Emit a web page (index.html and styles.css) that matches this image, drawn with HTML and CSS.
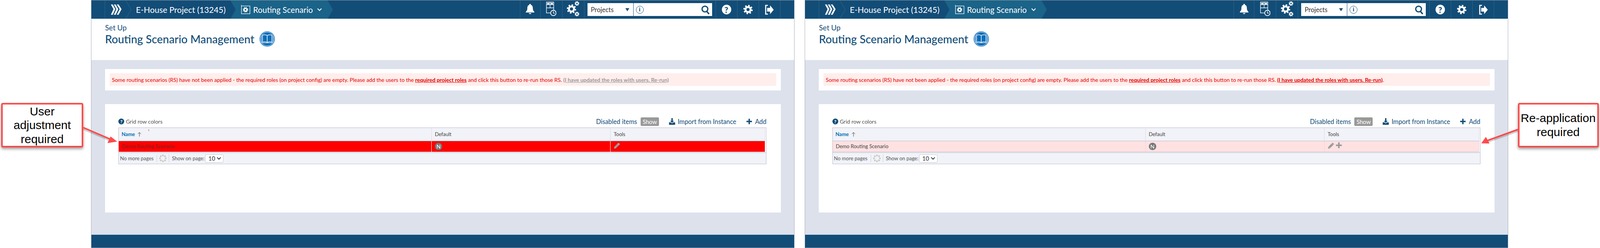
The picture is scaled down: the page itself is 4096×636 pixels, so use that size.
FILE: index.html
```html
<!DOCTYPE html>
<html lang="en">
<head>
<meta charset="utf-8">
<title>Routing Scenario Management</title>
<link rel="stylesheet" href="styles.css">
</head>
<body>
<svg class="sprite" aria-hidden="true">
  <symbol id="logo" viewBox="0 0 32 30"><path d="M1 1h5l7 13-7 15H1l7-15zM9 1h5l7 13-7 15H9l7-15zM17 1h5l8 13-8 15h-5l8-15z" fill="currentColor"/></symbol>
  <symbol id="gear" viewBox="0 0 24 24"><circle cx="12" cy="12" r="6.5" fill="none" stroke="currentColor" stroke-width="5"/><circle cx="12" cy="12" r="10" fill="none" stroke="currentColor" stroke-width="4" stroke-dasharray="3.9 3.95"/></symbol>
  <symbol id="gears" viewBox="0 0 32 40"><use href="#gear" x="0" y="8" width="24" height="24"/><use href="#gear" x="20" y="0" width="12" height="12"/><use href="#gear" x="20" y="27" width="12" height="12"/></symbol>
  <symbol id="bell" viewBox="0 0 24 26"><path d="M12 0a2 2 0 0 1 2 2.400c4 1 5 4.600 5 8.600 0 4 1 6.500 4 9.500v1.500H1V20.500C4 17.500 5 15 5 11c0-4 1-7.600 5-8.600A2 2 0 0 1 12 0zM9 23.500h6a3 2.500 0 0 1-6 0z" fill="currentColor"/></symbol>
  <symbol id="planner" viewBox="0 0 28 40"><g fill="none" stroke="currentColor" stroke-width="1.500"><rect x="1" y="1" width="20" height="30"/><path d="M1 8h20M11 1v16M1 17h20"/><circle cx="20" cy="31" r="7.500" fill="#124d78" stroke-width="2"/><path d="M20 26v5.500h4"/></g><path d="M3 3h6v5H3zM13 3h6v5h-6z" fill="currentColor"/></symbol>
  <symbol id="search" viewBox="0 0 24 26"><circle cx="10.500" cy="11" r="8" fill="none" stroke="currentColor" stroke-width="3.500"/><path d="M16 18l6 7" stroke="currentColor" stroke-width="4"/></symbol>
  <symbol id="exit" viewBox="0 0 26 30"><path d="M9 3H3v24h6" fill="none" stroke="currentColor" stroke-width="3"/><path d="M7 10h8V3l10 12-10 12v-7H7z" fill="currentColor"/></symbol>
  <symbol id="pagebook" viewBox="0 0 28 30"><path d="M2 1v26h25V4H2" fill="none" stroke="currentColor" stroke-width="1.500"/><use href="#gear" x="6" y="7" width="16" height="16"/></symbol>
  <symbol id="manual" viewBox="0 0 40 40"><circle cx="20" cy="20" r="19.500" fill="#0b6cb8"/><circle cx="20" cy="20" r="17.500" fill="none" stroke="#fff" stroke-width="1"/><path d="M20 11c-3-2-8-2-12-1v18c4-1 9-1 12 1 3-2 8-2 12-1V10c-4-1-9-1-12 1zM20 11v18" fill="none" stroke="#fff" stroke-width="1.500"/><path d="M5 12v18h30V12" fill="none" stroke="#fff" stroke-width="1"/></symbol>
  <symbol id="download" viewBox="0 0 24 24"><path d="M9.500 0h5v10H19l-7 7-7-7h4.500zM1 15h6l5 4 5-4h6v9H1z" fill="currentColor"/></symbol>
  <symbol id="plus" viewBox="0 0 16 16"><path d="M6 0h4v6h6v4h-6v6H6v-6H0V6h6z" fill="currentColor"/></symbol>
  <symbol id="pencil" viewBox="0 0 24 24"><path d="M17.500 1l5.500 5.500L7.500 22 1 23l1-6.500z" fill="currentColor"/><path d="M4 16.500l3.500 3.500M15 4l5 5" stroke="#fff" stroke-width=".8"/></symbol>
  <symbol id="spinner" viewBox="0 0 24 24"><g fill="#c9c9c2"><circle cx="12" cy="3" r="2.800"/><circle cx="18.400" cy="5.600" r="2.800"/><circle cx="21" cy="12" r="2.800"/><circle cx="18.400" cy="18.400" r="2.800"/><circle cx="12" cy="21" r="2.800"/><circle cx="5.600" cy="18.400" r="2.800"/><circle cx="3" cy="12" r="2.800"/><circle cx="5.600" cy="5.600" r="2.800"/></g></symbol>
  <symbol id="chev-down" viewBox="0 0 12 10"><path d="M1 2l5 5 5-5" fill="none" stroke="currentColor" stroke-width="2.200"/></symbol>
</svg>

<div class="page">
  <div class="gutter gutter-left">
    <div class="callout callout-left">User<br>adjustment<br>required</div>
  </div>

  <section class="app">
    <header class="topbar">
      <div class="topbar-start"></div>
      <div class="crumb-logo"><svg class="icon-logo"><use href="#logo"/></svg></div>
      <svg class="chev" viewBox="0 0 14 47" preserveAspectRatio="none"><polyline points="0,0 14,23.500 0,47"/></svg>
      <div class="crumb-project">E-House Project (13245)</div>
      <div class="crumb-active">
        <svg class="icon-pagebook"><use href="#pagebook"/></svg>
        <span>Routing Scenario</span>
        <svg class="icon-chev"><use href="#chev-down"/></svg>
      </div>
      <div class="topbar-end">
        <div class="tool tool-bell"><svg class="icon-bell"><use href="#bell"/></svg></div>
        <div class="tool tool-wide"><svg class="icon-planner"><use href="#planner"/></svg></div>
        <div class="tool tool-wide"><svg class="icon-gears"><use href="#gears"/></svg></div>
        <div class="tool tool-search">
          <div class="searchbox">
            <div class="search-scope"><span>Projects</span><i class="caret"></i></div>
            <div class="search-field"><span class="info">i</span><svg class="icon-search"><use href="#search"/></svg></div>
          </div>
        </div>
        <div class="tool"><span class="help">?</span></div>
        <div class="tool"><svg class="icon-gear"><use href="#gear"/></svg></div>
        <div class="tool"><svg class="icon-exit"><use href="#exit"/></svg></div>
      </div>
    </header>

    <div class="titlebar">
      <div class="kicker">Set Up</div>
      <h1 class="title">Routing Scenario Management <svg class="icon-manual"><use href="#manual"/></svg></h1>
    </div>

    <main class="content">
      <div class="panel panel-alert">
        <div class="alert">Some routing scenarios (RS) have not been applied - the required roles (on project config) are empty. Please add the users to the <a class="alert-link">required project roles</a> and click this button to re-run those RS. <a class="alert-action is-disabled">(I have updated the roles with users. Re-run)</a></div>
      </div>
      <div class="panel panel-grid">
        <div class="toolbar">
          <div class="legend"><span class="help-small">?</span>Grid row colors</div>
          <div class="actions">
            <span class="act-label">Disabled items</span><span class="badge">Show</span>
            <svg class="icon-download"><use href="#download"/></svg><span class="act-import">Import from Instance</span>
            <svg class="icon-plus"><use href="#plus"/></svg><span class="act-add">Add</span>
          </div>
        </div>
        <div class="grid">
          <div class="grid-row grid-head">
            <div class="cell cell-name">Name <svg class="sort" viewBox="0 0 12 16"><path d="M6 15V2M1 7l5-5 5 5" fill="none" stroke="#333" stroke-width="1.200"/></svg></div>
            <div class="cell">Default</div>
            <div class="cell">Tools</div>
          </div>
          <div class="grid-row grid-body row-error">
            <div class="cell">Demo Routing Scenario</div>
            <div class="cell"><span class="flag">N</span></div>
            <div class="cell cell-tools"><svg class="icon-pencil"><use href="#pencil"/></svg></div>
          </div>
          <div class="grid-foot">
            <span>No more pages</span>
            <svg class="spinner"><use href="#spinner"/></svg>
            <span>Show on page:</span>
            <span class="pagesize">10<svg class="pagesize-chev"><use href="#chev-down"/></svg></span>
          </div>
        </div>
      </div>
    </main>
    <footer class="bottombar"></footer>
  </section>

  <div class="gutter-mid"></div>

  <section class="app">
    <header class="topbar">
      <div class="topbar-start"></div>
      <div class="crumb-logo"><svg class="icon-logo"><use href="#logo"/></svg></div>
      <svg class="chev" viewBox="0 0 14 47" preserveAspectRatio="none"><polyline points="0,0 14,23.500 0,47"/></svg>
      <div class="crumb-project">E-House Project (13245)</div>
      <div class="crumb-active">
        <svg class="icon-pagebook"><use href="#pagebook"/></svg>
        <span>Routing Scenario</span>
        <svg class="icon-chev"><use href="#chev-down"/></svg>
      </div>
      <div class="topbar-end">
        <div class="tool tool-bell"><svg class="icon-bell"><use href="#bell"/></svg></div>
        <div class="tool tool-wide"><svg class="icon-planner"><use href="#planner"/></svg></div>
        <div class="tool tool-wide"><svg class="icon-gears"><use href="#gears"/></svg></div>
        <div class="tool tool-search">
          <div class="searchbox">
            <div class="search-scope"><span>Projects</span><i class="caret"></i></div>
            <div class="search-field"><span class="info">i</span><svg class="icon-search"><use href="#search"/></svg></div>
          </div>
        </div>
        <div class="tool"><span class="help">?</span></div>
        <div class="tool"><svg class="icon-gear"><use href="#gear"/></svg></div>
        <div class="tool"><svg class="icon-exit"><use href="#exit"/></svg></div>
      </div>
    </header>

    <div class="titlebar">
      <div class="kicker">Set Up</div>
      <h1 class="title">Routing Scenario Management <svg class="icon-manual"><use href="#manual"/></svg></h1>
    </div>

    <main class="content">
      <div class="panel panel-alert">
        <div class="alert">Some routing scenarios (RS) have not been applied - the required roles (on project config) are empty. Please add the users to the <a class="alert-link">required project roles</a> and click this button to re-run those RS. <a class="alert-action">(I have updated the roles with users. Re-run)</a>.</div>
      </div>
      <div class="panel panel-grid">
        <div class="toolbar">
          <div class="legend"><span class="help-small">?</span>Grid row colors</div>
          <div class="actions">
            <span class="act-label">Disabled items</span><span class="badge">Show</span>
            <svg class="icon-download"><use href="#download"/></svg><span class="act-import">Import from Instance</span>
            <svg class="icon-plus"><use href="#plus"/></svg><span class="act-add">Add</span>
          </div>
        </div>
        <div class="grid">
          <div class="grid-row grid-head">
            <div class="cell cell-name">Name <svg class="sort" viewBox="0 0 12 16"><path d="M6 15V2M1 7l5-5 5 5" fill="none" stroke="#333" stroke-width="1.200"/></svg></div>
            <div class="cell">Default</div>
            <div class="cell">Tools</div>
          </div>
          <div class="grid-row grid-body row-warning">
            <div class="cell">Demo Routing Scenario</div>
            <div class="cell"><span class="flag">N</span></div>
            <div class="cell cell-tools"><svg class="icon-pencil"><use href="#pencil"/></svg><svg class="icon-plus-tool"><use href="#plus"/></svg></div>
          </div>
          <div class="grid-foot">
            <span>No more pages</span>
            <svg class="spinner"><use href="#spinner"/></svg>
            <span>Show on page:</span>
            <span class="pagesize">10<svg class="pagesize-chev"><use href="#chev-down"/></svg></span>
          </div>
        </div>
      </div>
    </main>
    <footer class="bottombar"></footer>
  </section>

  <div class="gutter gutter-right">
    <div class="callout callout-right">Re-application<br>required</div>
  </div>

  <svg class="arrows" viewBox="0 0 4096 636" aria-hidden="true">
    <g class="arrow-shadow">
      <path d="M213 331L287 362"/>
      <path d="M3886 336L3805 365"/>
    </g>
    <g class="arrow-line">
      <path d="M213 327L286 358.500"/>
      <path d="M3886 332L3806 361"/>
    </g>
    <path class="arrow-head" d="M300 363L283 350 275 367z"/>
    <path class="arrow-head" d="M3792 367.500L3813 368 3804 351z"/>
    <rect class="tick" x="380" y="332" width="1.500" height="4"/>
  </svg>
</div>
</body>
</html>
```

FILE: styles.css
```css
* { box-sizing: border-box; }
html, body { margin: 0; padding: 0; background: #fff; }
body { font-family: Lato, "Open Sans", sans-serif; overflow: hidden; }
.sprite { display: none; }
svg { display: block; flex: none; }

.page { position: relative; display: flex; width: 4096px; height: 636px; overflow: hidden; }

/* callouts */
.gutter { flex: none; padding-top: 264px; }
.gutter-left { width: 232.5px; padding-left: 3px; }
.gutter-right { width: 234.5px; padding-left: 24.5px; }
.gutter-mid { flex: none; width: 26.5px; }
.callout {
  display: flex; align-items: center; justify-content: center; text-align: center;
  height: 114px; border: 4px solid #ff4a4a; border-radius: 4px; background: #fff;
  box-shadow: 0 4px 7px rgba(0, 0, 0, .4);
  font: 30px/35.600px "Liberation Sans", Arial, sans-serif; color: #000;
}
.callout-left { width: 210px; }
.callout-right { width: 207px; }

.arrows { position: absolute; left: 0; top: 0; width: 4096px; height: 636px; pointer-events: none; }
.arrow-line path { fill: none; stroke: #ff4a4a; stroke-width: 4; }
.arrow-shadow path { fill: none; stroke: rgba(0, 0, 0, .18); stroke-width: 5; }
.arrow-head { fill: #ff4a4a; }
.tick { fill: #ff4a4a; }

/* app frame */
.app {
  flex: none; display: flex; flex-direction: column; width: 1801px; height: 636px;
  border: 1px solid #a9adb8; border-top-color: #9a9a9a; border-bottom-color: #9a9a9a;
}

/* top bar */
.topbar { flex: none; display: flex; align-items: stretch; height: 47px; background: #124d78; color: #fff; }
.topbar-start { flex: none; width: 35.500px; border-right: 1px solid #2d6588; }
.crumb-logo { flex: none; width: 53px; display: flex; align-items: center; padding-left: 14px; }
.icon-logo { width: 30px; height: 29px; }
.chev { flex: none; width: 14px; height: 47px; }
.chev polyline { fill: none; stroke: #2d6c92; stroke-width: 1; }
.crumb-project { flex: none; display: flex; align-items: center; padding-left: 12px; width: 254px; font-size: 21.200px; white-space: nowrap; }
.crumb-active {
  flex: none; display: flex; align-items: center; width: 262px; padding-left: 26px; margin-left: 0;
  background: #1a6389; font-size: 20.600px; white-space: nowrap;
  clip-path: polygon(0 0, calc(100% - 13px) 0, 100% 50%, calc(100% - 13px) 100%, 0 100%, 13px 50%);
}
.icon-pagebook { width: 25px; height: 26px; margin-right: 7px; }
.icon-chev { width: 12px; height: 10px; margin-left: 11px; }

.topbar-end { display: flex; margin-left: auto; padding-right: 35px; }
.tool { flex: none; display: flex; align-items: center; justify-content: center; width: 55px; border-left: 1px solid #2d6588; }
.tool:last-child { border-right: 1px solid #2d6588; width: 56px; }
.tool-bell { width: 52px; }
.tool-wide { width: 56px; }
.tool-search { width: 337px; padding: 0 9px 0 8px; }
.icon-bell { width: 24px; height: 26px; margin-top: -3px; }
.icon-planner { width: 26px; height: 38px; margin-top: -3px; }
.icon-gears { width: 32px; height: 40px; margin-top: -3px; }
.icon-gear { width: 24px; height: 25px; }
.icon-exit { width: 25px; height: 28px; }
.help {
  display: flex; align-items: center; justify-content: center; width: 24px; height: 25px;
  border-radius: 50%; background: #fff; color: #124d78; font-size: 21px; font-weight: 900;
}

.searchbox { display: flex; width: 100%; height: 33px; background: #fff; color: #333; }
.search-scope {
  flex: none; display: flex; align-items: center; justify-content: space-between;
  width: 118px; padding: 0 10px 0 9px; border-right: 1px solid #124d78; font-size: 16.500px;
}
.caret { width: 0; height: 0; border: 5px solid transparent; border-top: 8px solid #124d78; border-bottom: 0; }
.search-field { flex: 1; display: flex; align-items: center; justify-content: space-between; padding: 0 6px; color: #124d78; }
.info {
  display: flex; align-items: center; justify-content: center; width: 20px; height: 20px;
  border: 1.500px solid #124d78; border-radius: 50%; font: 700 14px "Liberation Serif", serif;
}
.icon-search { width: 22px; height: 26px; }

/* title */
.titlebar { flex: none; height: 106px; padding: 12px 0 0 35.500px; background: #fff; color: #124d78; }
.kicker { font-size: 18.700px; line-height: 23px; }
.title { display: flex; align-items: center; gap: 13px; margin: -4px 0 0; font-size: 28.300px; line-height: 42px; font-weight: 500; white-space: pre; }
.icon-manual { width: 40px; height: 40px; margin-left: -7px; }

/* content */
.content { flex: 1; padding: 23px 34px 0 35px; background: #dce1ec; }
.panel { background: #fff; }
.panel-alert { height: 54.500px; padding: 11.250px 12px; margin-bottom: 35.600px; }
.alert { display: flex; align-items: center; height: 32px; padding: 0 6px; background: #ffeeec; color: #e60000; font-size: 13.850px; white-space: pre; }
.alert-link { font-weight: 700; text-decoration: underline; }
.alert-action { color: #e60000; font-weight: 700; text-decoration: underline; }
.alert-action.is-disabled { color: #9a9a9a; }

.panel-grid { height: 277.500px; padding: 34px 36.500px 0 34.700px; }
.toolbar { display: flex; align-items: center; justify-content: space-between; height: 21.500px; margin-bottom: 4.500px; }
.legend { display: flex; align-items: center; gap: 4px; font-size: 14px; color: #555; }
.help-small {
  display: flex; align-items: center; justify-content: center; width: 15px; height: 15px;
  border-radius: 50%; background: #124d78; color: #fff; font-size: 12px; font-weight: 900;
}
.actions { display: flex; align-items: center; color: #124d78; font-size: 16.300px; }
.badge {
  display: flex; align-items: center; justify-content: center; width: 47px; height: 21.500px; margin: 0 25px 0 9px;
  border-radius: 3px; background: #999; color: #fff; font-size: 15px;
}
.icon-download { width: 17px; height: 19px; margin-right: 6px; }
.icon-plus { width: 14px; height: 15px; margin: 0 8px 0 26px; }

/* grid */
.grid { height: 94px; border: 1px solid #b9bccd; background: #fff; font-size: 13px; color: #444; }
.grid-row { display: grid; grid-template-columns: 801px 458px 1fr; margin-right: 2px; }
.cell { display: flex; align-items: center; padding-left: 8px; border-right: 1px solid #d9dbe6; }
.grid-head { height: 33.500px; background: #f1f3f8; border-bottom: 1px solid #b9bccd; }
.cell-name { color: #0b72b5; font-weight: 700; gap: 7px; padding-left: 7px; }
.sort { width: 10px; height: 13px; }
.grid-body { height: 28.500px; border-bottom: 1px solid #b9bccd; }
.row-error { background: #f00; color: #7a2222; }
.row-error .cell { border-right-color: #fff; }
.row-warning { background: #ffe1e1; color: #444; }
.row-warning .cell { border-right-color: #e8d8dc; }
.flag {
  display: flex; align-items: center; justify-content: center; width: 19px; height: 19px;
  border-radius: 50%; background: #777; color: #fff; font-size: 14px;
}
.cell-tools { gap: 4px; color: #999; padding-bottom: 3px; }
.icon-pencil { width: 17px; height: 17px; }
.icon-plus-tool { width: 15px; height: 15px; margin-bottom: 3px; }
.grid-foot {
  display: flex; align-items: center; height: 29px; margin-top: 1px; padding-left: 3px;
  background: #f1f3f8; border-top: 1px solid #b9bccd; color: #555;
}
.spinner { width: 32px; height: 20px; margin-left: 8px; padding: 0 5px; border-left: 1px solid #cfd1da; border-right: 1px solid #cfd1da; margin-right: 7px; }
.pagesize {
  display: flex; align-items: center; justify-content: space-between; width: 47px; height: 21px; margin-left: 2px; padding: 0 5px 0 7px;
  border: 1px solid #c6c8d0; border-radius: 3px; background: #fff; color: #333; font-size: 15px;
}
.pagesize-chev { width: 11px; height: 9px; }

.bottombar { flex: none; height: 33px; background: #124d78; }
```
